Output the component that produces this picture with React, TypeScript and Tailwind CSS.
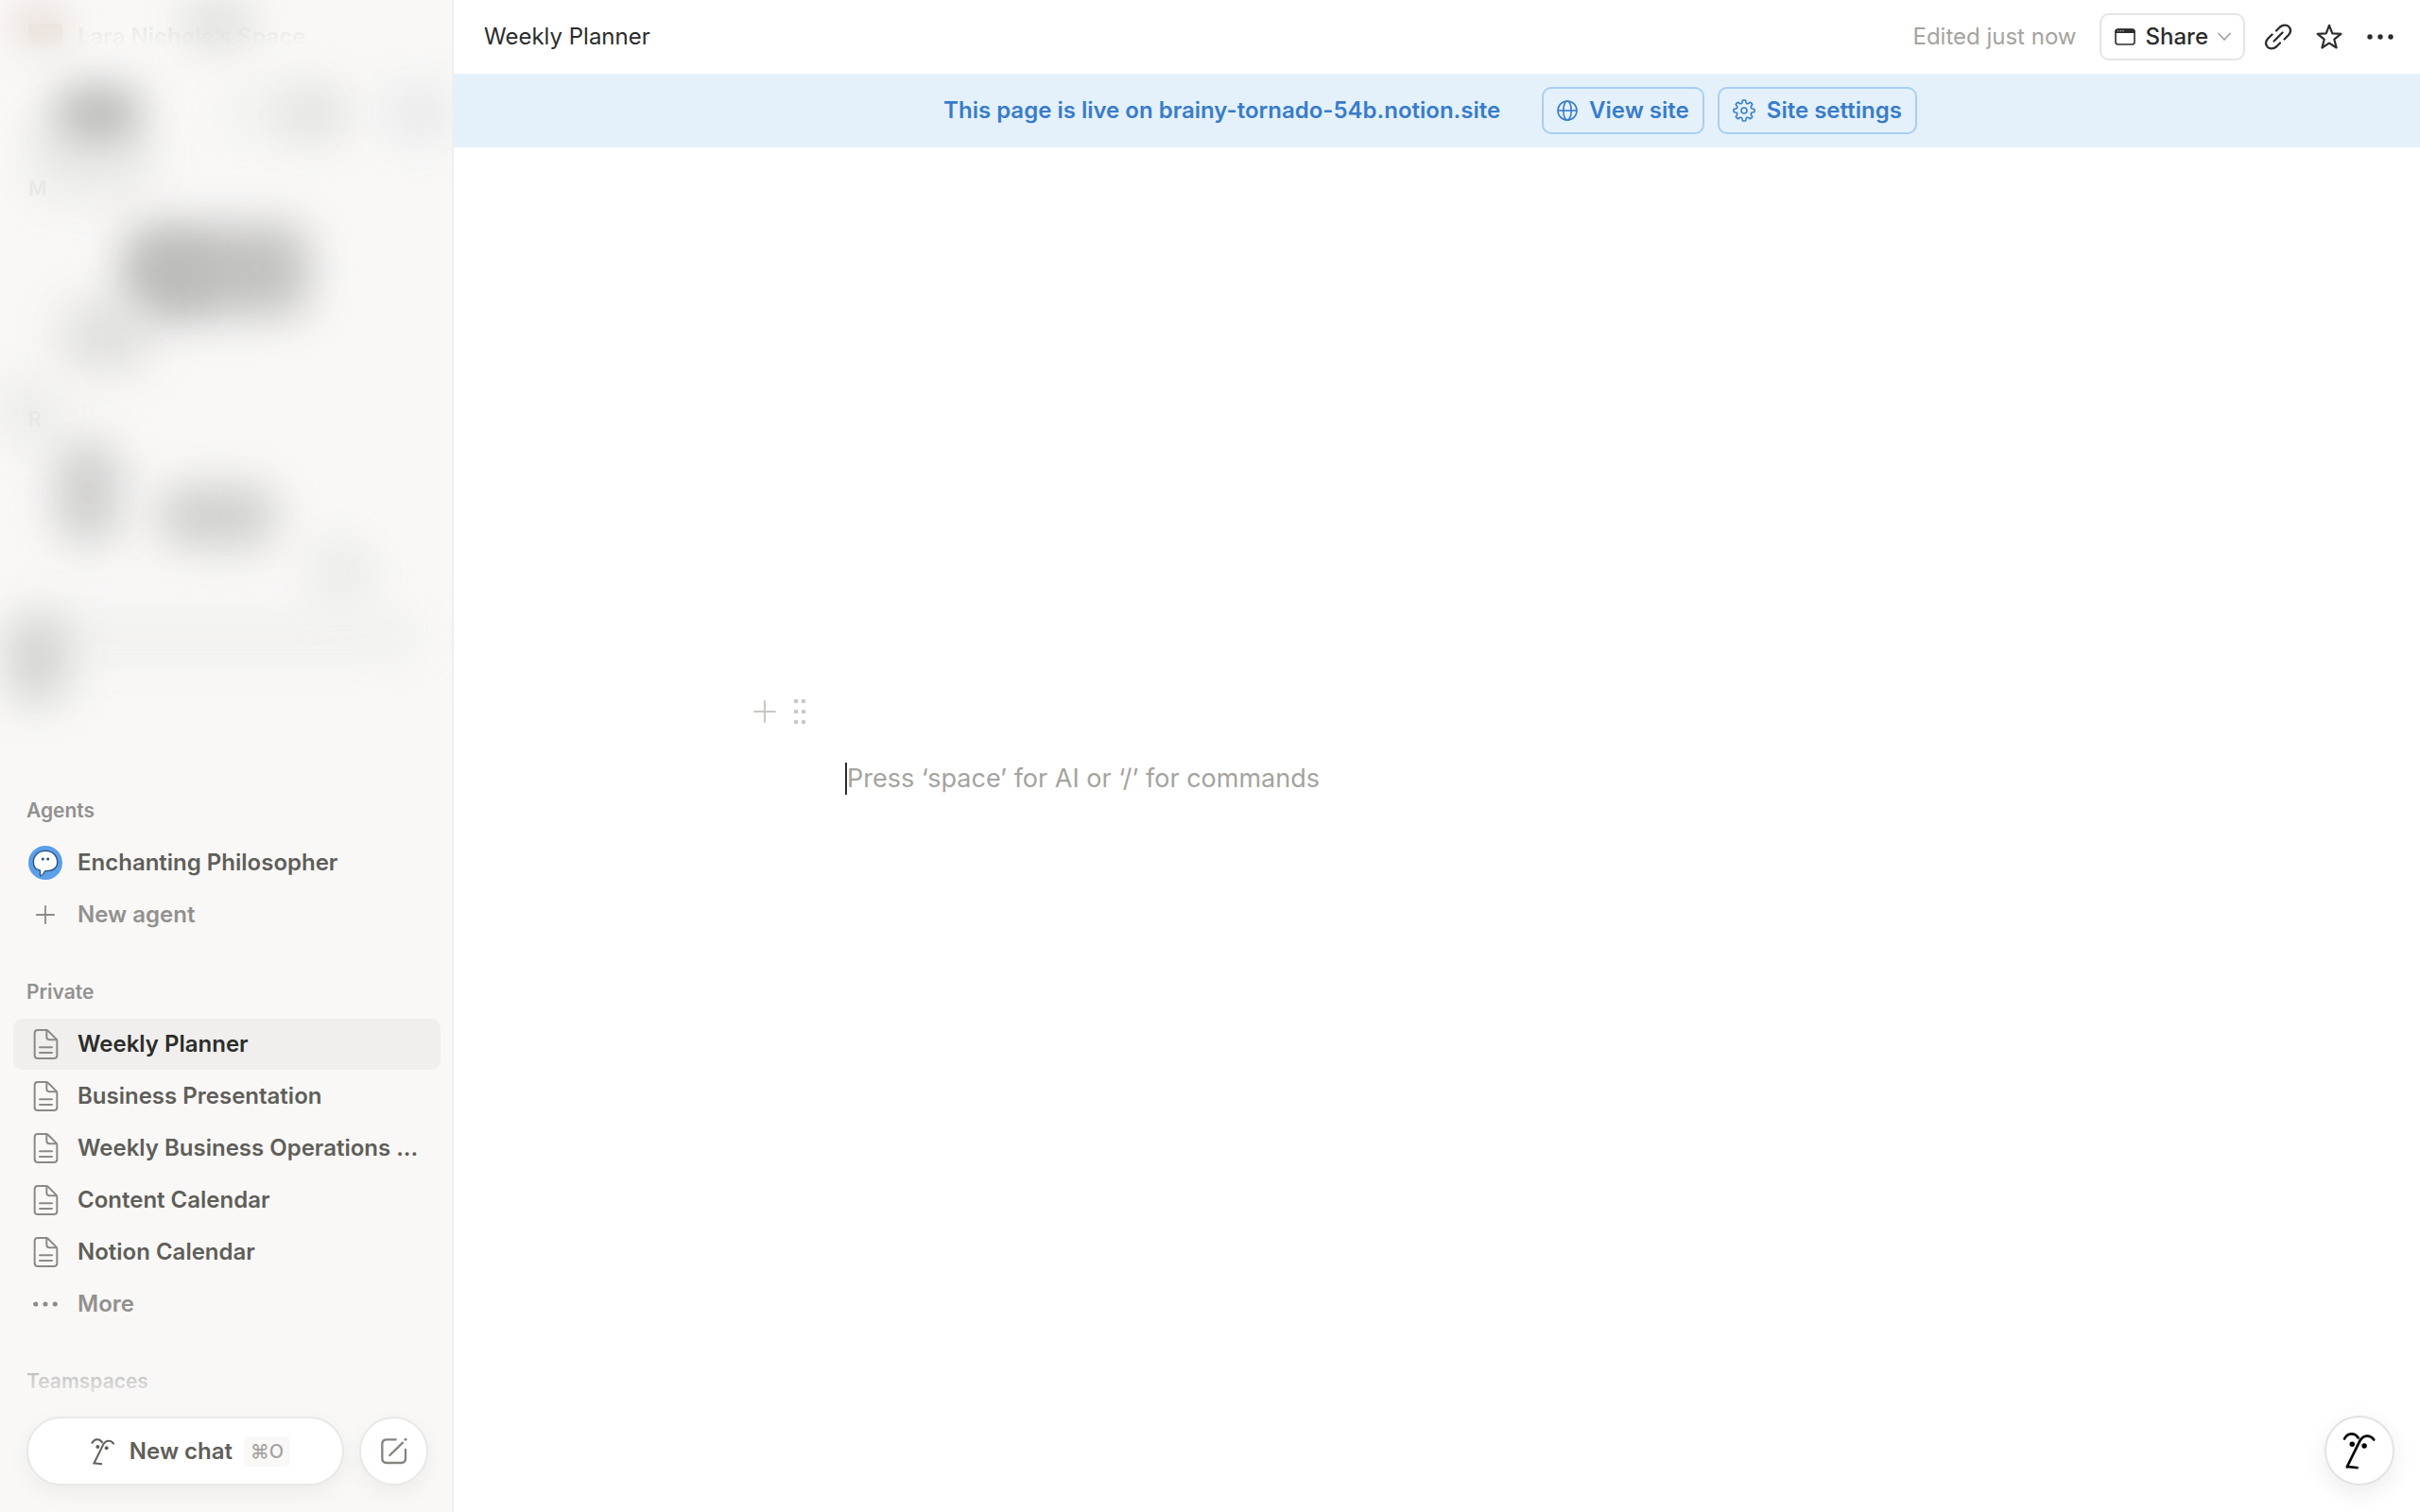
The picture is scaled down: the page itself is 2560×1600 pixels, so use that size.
import type { ReactNode } from 'react'
import clsx from 'clsx'

const FaceIcon = ({ className, strokeWidth = 8 }: { className?: string; strokeWidth?: number }) => (
  <svg viewBox="110 102 130 130" className={className} fill="none" stroke="currentColor" strokeWidth={strokeWidth} aria-hidden="true">
    <path d="M128 130C138 111 160 110 171 127" strokeLinecap="round" />
    <path d="M136 218L174 141C184 117 208 116 220 133" strokeLinecap="round" />
    <path d="M134 217L171 221" />
    <circle cx="152" cy="147" r="8" fill="currentColor" stroke="none" />
    <circle cx="190" cy="152" r="8" fill="currentColor" stroke="none" />
  </svg>
)

const PageIcon = () => (
  <svg viewBox="0 0 81 102" className="w-[27px] h-[34px]" fill="none" stroke="currentColor" strokeWidth="6" strokeLinecap="round" strokeLinejoin="round" aria-hidden="true">
    <path d="M15 6H41Q45 6 48 9L73 34Q76 37 76 41V86Q76 96 66 96H15Q5 96 5 86V16Q5 6 15 6Z" />
    <path d="M43 7V27Q43 37 53 37H75" />
    <path d="M21 61H60M21 78H60" />
  </svg>
)

const PlusIcon = ({ className }: { className?: string }) => (
  <svg viewBox="0 0 24 24" className={className} stroke="currentColor" strokeWidth="2" strokeLinecap="round" aria-hidden="true">
    <path d="M12 2V22M2 12H22" />
  </svg>
)

const DotsIcon = ({ className }: { className?: string }) => (
  <svg viewBox="0 0 30 30" className={className} fill="currentColor" aria-hidden="true">
    <circle cx="4" cy="15" r="2.700" />
    <circle cx="15" cy="15" r="2.700" />
    <circle cx="26" cy="15" r="2.700" />
  </svg>
)

const AgentIcon = () => (
  <svg viewBox="0 0 108 108" className="w-9 h-9" aria-hidden="true">
    <circle cx="54" cy="54" r="54" fill="#5b9ee9" />
    <path
      d="M54 16C76 16 92 31 92 52C92 71 77 80 60 80H53C50 87 45 93 38 96C37 91 38 85 37 78C24 76 16 67 16 52C16 31 32 16 54 16Z"
      fill="#fff"
      stroke="#274e7d"
      strokeWidth="4"
      strokeLinejoin="round"
    />
    <circle cx="46" cy="42" r="4.500" fill="#274e7d" />
    <circle cx="62" cy="42" r="4.500" fill="#274e7d" />
  </svg>
)

const ComposeIcon = () => (
  <svg viewBox="0 0 90 90" className="w-[30px] h-[30px]" fill="none" stroke="currentColor" strokeWidth="7" strokeLinecap="round" aria-hidden="true">
    <path d="M50 7H21Q7 7 7 21V67Q7 81 21 81H67Q81 81 81 67V39" />
    <path d="M31 57L72 17" />
    <circle cx="81" cy="7" r="4.500" fill="currentColor" stroke="none" />
  </svg>
)

const GlobeIcon = () => (
  <svg viewBox="0 0 22 22" className="w-[22px] h-[22px]" fill="none" stroke="currentColor" strokeWidth="1.600" aria-hidden="true">
    <circle cx="11" cy="11" r="10" />
    <ellipse cx="11" cy="11" rx="4.200" ry="10" />
    <path d="M1 11H21" />
  </svg>
)

// Eight rounded teeth around the hub
const gearPath = Array.from({ length: 8 }, (_, i) => {
  const at = (deg: number, r: number) => {
    const a = ((i * 45 + deg) * Math.PI) / 180
    return `${(12 + r * Math.sin(a)).toFixed(2)} ${(12 - r * Math.cos(a)).toFixed(2)}`
  }
  return `${i === 0 ? 'M' : 'L'}${at(-14, 8.6)}L${at(-9, 10.8)}Q${at(0, 11.4)} ${at(9, 10.8)}L${at(14, 8.6)}Q${at(22.5, 7.4)} ${at(31, 8.6)}`
}).join('') + 'Z'

const GearIcon = () => (
  <svg viewBox="0 0 24 24" className="w-6 h-6" fill="none" stroke="currentColor" strokeWidth="1.600" strokeLinejoin="round" aria-hidden="true">
    <path d={gearPath} />
    <circle cx="12" cy="12" r="3" />
  </svg>
)

const WindowIcon = () => (
  <svg viewBox="0 0 24 20" className="w-6 h-5" fill="none" aria-hidden="true">
    <rect x="2" y="2" width="20" height="16" rx="2.500" stroke="currentColor" strokeWidth="1.600" />
    <path d="M1.500 6V4.500Q1.500 1.500 4.500 1.500H19.500Q22.500 1.500 22.500 4.500V6Z" fill="currentColor" />
    <path d="M4 3.800H5.200M6.700 3.800H7.900M9.400 3.800H10.600" stroke="#fff" />
  </svg>
)

const ChevronIcon = () => (
  <svg viewBox="0 0 14 10" className="w-[14px] h-[10px] text-[#a5a39e]" fill="none" stroke="currentColor" strokeWidth="1.800" strokeLinecap="round" aria-hidden="true">
    <path d="M1 1.500L7 8L13 1.500" />
  </svg>
)

const LinkIcon = () => (
  <svg viewBox="0 0 30 30" className="w-[30px] h-[30px]" fill="none" stroke="currentColor" strokeWidth="2.300" strokeLinecap="round" aria-hidden="true">
    <path d="M13 8.500L17 4.500C20 2 24 2 26 4C28.500 6.500 28.500 10 26 13L21.500 17.500" />
    <path d="M17 21.500L13 25.500C10 28 6 28 4 26C1.500 23.500 1.500 20 4 17L8.500 12.500" />
    <path d="M10.500 19.500L19.500 10.500" />
  </svg>
)

const StarIcon = () => (
  <svg viewBox="0 0 30 30" className="w-[30px] h-[30px]" fill="none" stroke="currentColor" strokeWidth="2.200" strokeLinejoin="round" aria-hidden="true">
    <path d="M15 2.800L18.300 11.400L27.400 11.900L20.300 17.700L22.600 26.500L15 21.600L7.400 26.500L9.700 17.700L2.600 11.900L11.700 11.400Z" />
  </svg>
)

const DragIcon = () => (
  <svg viewBox="0 0 16 28" className="w-4 h-7" fill="currentColor" aria-hidden="true">
    {[3, 14, 25].map((y) => (
      <g key={y}>
        <circle cx="4" cy={y} r="2.300" />
        <circle cx="12" cy={y} r="2.300" />
      </g>
    ))}
  </svg>
)

const NavRow = ({ icon, label, active, muted }: { icon: ReactNode; label: string; active?: boolean; muted?: boolean }) => (
  <li>
    <a
      href="#"
      className={clsx(
        'flex items-center gap-4 h-[54px] px-4 rounded-[10px] text-2xl font-[560] whitespace-nowrap',
        active && 'bg-[#f0efed] text-[#2c2c2b]',
        muted && 'text-[#91918e]',
        !active && !muted && 'text-[#5f5e59]'
      )}
    >
      <span className="flex items-center justify-center w-9 shrink-0 text-[#8b8a86]">{icon}</span>
      <span>{label}</span>
    </a>
  </li>
)

const NavSection = ({ title, children }: { title: string; children?: ReactNode }) => (
  <section className="flex flex-col gap-px">
    <h2 className="flex items-center h-[54px] px-[14px] text-[21px] font-[560] text-[#91918e]">{title}</h2>
    {children && <ul className="flex flex-col gap-px">{children}</ul>}
  </section>
)

const pages = ['Weekly Planner', 'Business Presentation', 'Weekly Business Operations ...', 'Content Calendar', 'Notion Calendar']

// Soft smudges that hide the workspace details
const smudges = [
  'left-[30px] top-[645px] w-[420px] h-[60px] bg-[#f1f1ef] blur-[24px]',
  'left-[30px] top-[120px] w-[130px] h-[90px] bg-[#e9e9e7] blur-[26px]',
  'left-[10px] top-[0px] w-[66px] h-[56px] bg-[#ece3dd] blur-[18px]',
  'left-[190px] top-[0px] w-[80px] h-[50px] bg-[#dededd] blur-[22px]',
  'left-[60px] top-[90px] w-[88px] h-[60px] bg-[#b6b6b5] blur-[22px]',
  'left-[230px] top-[92px] w-[110px] h-[56px] bg-[#f1f1f0] blur-[24px]',
  'left-[296px] top-[92px] w-[72px] h-[56px] bg-[#e0e0df] blur-[24px]',
  'left-[410px] top-[90px] w-[66px] h-[60px] bg-[#e4e6e7] blur-[24px]',
  'left-[134px] top-[238px] w-[192px] h-[96px] bg-[#bbbbb9] blur-[24px]',
  'left-[144px] top-[262px] w-[80px] h-[64px] bg-[#b9b9b7] blur-[24px]',
  'left-[66px] top-[320px] w-[92px] h-[70px] bg-[#dadad8] blur-[26px]',
  'left-[0px] top-[400px] w-[60px] h-[70px] bg-[#e9e9e7] blur-[24px]',
  'left-[60px] top-[468px] w-[66px] h-[106px] bg-[#c9c9c8] blur-[24px]',
  'left-[168px] top-[514px] w-[124px] h-[64px] bg-[#c9c9c8] blur-[24px]',
  'left-[326px] top-[570px] w-[70px] h-[70px] bg-[#ebebea] blur-[22px]',
  'left-[8px] top-[650px] w-[62px] h-[94px] bg-[#cdcecc] blur-[24px]',
]

const BlurredNav = () => (
  <div className="relative h-[831px] shrink-0 overflow-hidden">
    <div className="relative flex items-center gap-4 h-[78px] px-[30px] text-2xl font-[560] text-[#dfdedc]">
      <span className="w-9 h-7 rounded-sm bg-[#e0d9d5]"></span>
      <span>Lara Nichole’s Space</span>
      <div className="absolute inset-0 bg-gradient-to-b from-[#f9f8f7]/30 from-30% to-[#f9f8f7] to-65%"></div>
    </div>
    <div className="flex flex-col gap-[222px] pt-[111px] pl-[30px] text-[21px] leading-[22px] font-[560] text-[#e9e9e7]">
      <span>M</span>
      <span>R</span>
    </div>
    {smudges.map((smudge) => (
      <div key={smudge} className={clsx('absolute rounded-3xl opacity-90', smudge)}></div>
    ))}
  </div>
)

const Sidebar = () => (
  <aside className="flex flex-col w-[480px] shrink-0 h-screen bg-[#f9f8f7] border-r-2 border-[#f0efed]">
    <div className="relative flex-1 min-h-0 overflow-hidden">
      <BlurredNav />
      <nav className="flex flex-col gap-7 pl-[14px] pr-3">
        <NavSection title="Agents">
          <NavRow icon={<AgentIcon />} label="Enchanting Philosopher" />
          <NavRow icon={<PlusIcon className="w-[22px] h-[22px]" />} label="New agent" muted />
        </NavSection>
        <NavSection title="Private">
          {pages.map((page, i) => (
            <NavRow key={page} icon={<PageIcon />} label={page} active={i === 0} />
          ))}
          <NavRow icon={<DotsIcon className="w-7 h-7" />} label="More" muted />
        </NavSection>
        <NavSection title="Teamspaces" />
      </nav>
      <div className="absolute inset-x-0 bottom-0 h-16 bg-gradient-to-b from-[#f9f8f7]/0 to-[#f9f8f7]"></div>
    </div>

    <div className="flex gap-4 pt-3 pb-7 pl-7 pr-[25px]">
      <button className="flex flex-1 items-center justify-center gap-3 h-[73px] pl-2 rounded-full bg-white border-2 border-[#e9e8e5] shadow-[0_8px_24px_rgba(0,0,0,0.05)] text-2xl font-[560] text-[#5f5e59]">
        <FaceIcon className="w-8 h-8" strokeWidth={8} />
        <span>New chat</span>
        <kbd className="flex items-center h-8 px-[7px] rounded-md bg-[#f9f8f7] font-['Inter',sans-serif] text-xl font-medium text-[#a5a39e]">⌘O</kbd>
      </button>
      <button aria-label="New page" className="flex items-center justify-center w-[73px] h-[73px] rounded-full bg-white border-2 border-[#e9e8e5] shadow-[0_8px_24px_rgba(0,0,0,0.05)] text-[#85837e]">
        <ComposeIcon />
      </button>
    </div>
  </aside>
)

const TopBar = () => (
  <header className="flex items-center justify-between h-[78px] pl-8 pr-[27px] text-2xl text-[#2c2c2b]">
    <h1>Weekly Planner</h1>
    <div className="flex items-center gap-5">
      <span className="mr-1 text-[#a5a39e]">Edited just now</span>
      <button className="flex items-center gap-[10px] h-[50px] px-[13px] rounded-[10px] border-2 border-[#e6e5e3]">
        <WindowIcon />
        <span className="font-medium">Share</span>
        <ChevronIcon />
      </button>
      <div className="flex items-center gap-6">
        <button aria-label="Copy link"><LinkIcon /></button>
        <button aria-label="Add to favorites"><StarIcon /></button>
        <button aria-label="More actions"><DotsIcon className="w-[30px] h-[30px]" /></button>
      </div>
    </div>
  </header>
)

const bannerButton = 'flex items-center gap-3 h-[50px] px-[14px] rounded-[10px] border-2 border-[#a9cdf5]'

const LiveBanner = () => (
  <div className="flex items-center justify-center h-[78px] pr-[14px] bg-[#e4f1fb] text-2xl font-[560] text-[#387ccb]">
    <span>
      This page is live on <a href="#">brainy-tornado-54b.notion.site</a>
    </span>
    <div className="flex gap-[14px] ml-11">
      <button className={bannerButton}>
        <GlobeIcon />
        View site
      </button>
      <button className={bannerButton}>
        <GearIcon />
        Site settings
      </button>
    </div>
  </div>
)

const Editor = () => (
  <div className="pt-[582px] pl-[316px]">
    <div className="flex items-center gap-4 h-[30px] text-[#c9c7c2]">
      <button aria-label="Add block"><PlusIcon className="w-[26px] h-[26px]" /></button>
      <button aria-label="Drag block"><DragIcon /></button>
    </div>
    <div className="mt-[39px] ml-[98px] mr-[526px] h-[34px] flex items-center border-l-2 border-[#2c2c2b]">
      <input
        type="text"
        aria-label="Page content"
        placeholder="Press ‘space’ for AI or ‘/’ for commands"
        className="w-full text-[27px] leading-[34px] placeholder:text-[#a5a39e] outline-none"
      />
    </div>
  </div>
)

export default function App() {
  return (
    <div className="flex h-screen bg-white font-['Inter',sans-serif]">
      <Sidebar />
      <main className="flex-1 min-w-0">
        <TopBar />
        <LiveBanner />
        <Editor />
      </main>
      <button aria-label="Ask AI" className="fixed right-[27px] bottom-7 flex items-center justify-center w-[74px] h-[74px] rounded-full bg-white border-2 border-[#e4e3e0] shadow-[0_8px_24px_rgba(0,0,0,0.08)] text-black">
        <FaceIcon className="w-11 h-11" />
      </button>
    </div>
  )
}
